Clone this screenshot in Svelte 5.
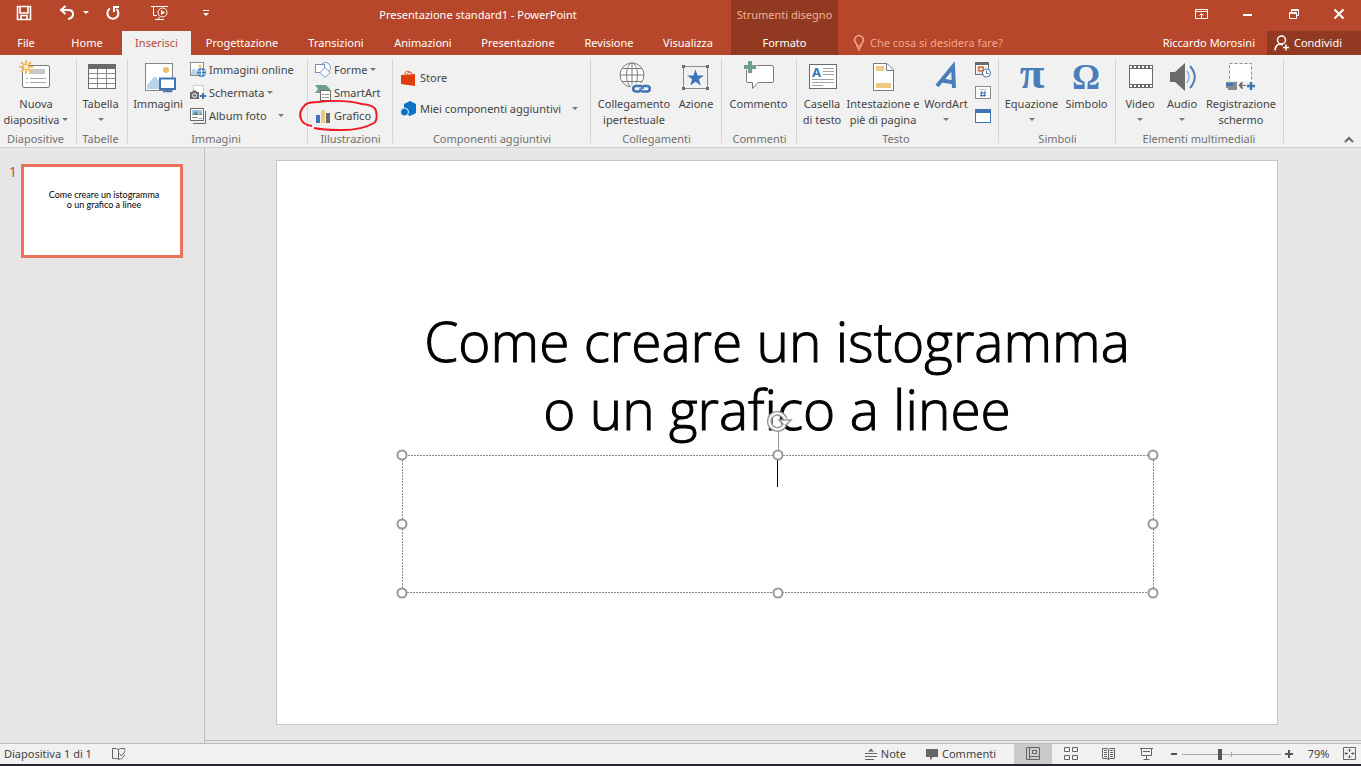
<script>
  const tabs = ['File', 'Home', 'Inserisci', 'Progettazione', 'Transizioni', 'Animazioni', 'Presentazione', 'Revisione', 'Visualizza'];

  const groups = [
    { id: 'slides', label: 'Diapositive', items: [{ icon: 'newslide', lines: ['Nuova', 'diapositiva'], drop: 'inline' }] },
    { id: 'tables', label: 'Tabelle', items: [{ icon: 'table', lines: ['Tabella'], drop: 'below' }] },
    {
      id: 'images', label: 'Immagini',
      items: [{ icon: 'picture', lines: ['Immagini'] }],
      list: [
        { icon: 'online', text: 'Immagini online' },
        { icon: 'screenshot', text: 'Schermata', drop: true },
        { icon: 'album', text: 'Album foto', drop: true, wide: true }
      ]
    },
    {
      id: 'illustrations', label: 'Illustrazioni', items: [],
      list: [
        { icon: 'shapes', text: 'Forme', drop: true },
        { icon: 'smartart', text: 'SmartArt' },
        { icon: 'chart', text: 'Grafico', marked: true }
      ]
    },
    {
      id: 'addins', label: 'Componenti aggiuntivi', items: [],
      list: [
        { icon: 'store', text: 'Store' },
        { icon: 'addin', text: 'Miei componenti aggiuntivi', drop: true, wide: true }
      ]
    },
    { id: 'links', label: 'Collegamenti', items: [{ icon: 'link', lines: ['Collegamento', 'ipertestuale'] }, { icon: 'action', lines: ['Azione'] }] },
    { id: 'comments', label: 'Commenti', items: [{ icon: 'comment', lines: ['Commento'] }] },
    {
      id: 'text', label: 'Testo',
      items: [
        { icon: 'textbox', lines: ['Casella', 'di testo'] },
        { icon: 'header', lines: ['Intestazione e', 'piè di pagina'] },
        { icon: 'wordart', lines: ['WordArt'], drop: 'below' }
      ],
      list: [
        { icon: 'date', name: 'Data e ora' },
        { icon: 'number', name: 'Numero diapositiva' },
        { icon: 'object', name: 'Oggetto' }
      ]
    },
    { id: 'symbols', label: 'Simboli', items: [{ icon: 'pi', lines: ['Equazione'], drop: 'below' }, { icon: 'omega', lines: ['Simbolo'] }] },
    {
      id: 'media', label: 'Elementi multimediali',
      items: [
        { icon: 'video', lines: ['Video'], drop: 'below' },
        { icon: 'audio', lines: ['Audio'], drop: 'below' },
        { icon: 'record', lines: ['Registrazione', 'schermo'] }
      ]
    }
  ];

  const handles = ['nw', 'n', 'ne', 'w', 'e', 'sw', 's', 'se'];
  let zoom = $state(38);
</script>

{#snippet bigIcon(name)}
  <svg class="big" viewBox="0 0 32 32" aria-hidden="true">
    {#if name === 'newslide'}
      <rect x="2.5" y="5.5" width="27" height="22" rx="1.5" fill="#fff" stroke="#7b7b7b" />
      <rect x="9" y="9" width="16" height="5" fill="#c8c8c8" />
      <path d="M6 18.500H8M10 18.500H26M6 22.500H8M10 22.500H26" stroke="#a5a5a5" />
      <path d="M6 0V14M-1 7H13M1 2L11 12M11 2L1 12" stroke="#f0bf62" stroke-width="2" />
      <circle cx="6" cy="7" r="2.500" fill="#fff3d6" stroke="#f0bf62" />
    {:else if name === 'table'}
      <rect x="3.500" y="4.500" width="27" height="24" fill="#fff" stroke="#6b6b6b" />
      <rect x="3" y="4" width="28" height="5" fill="#6b6b6b" />
      <path d="M4 13.500H30M4 18.500H30M4 23.500H30M12.500 9V28M21.500 9V28" stroke="#8b8b8b" />
    {:else if name === 'picture'}
      <rect x="3.500" y="3.500" width="27" height="27" fill="#fff" stroke="#858585" />
      <circle cx="24" cy="10" r="3" fill="#edc063" />
      <path d="M5 29V25L12 17Q13.500 16 15 18L17 21V29Z" fill="#b9d2ea" />
      <rect x="18" y="18.500" width="15" height="10.500" fill="#fff" stroke="#3f74b5" stroke-width="2" />
      <path d="M25.500 29V31M21 31.500H30" stroke="#3f74b5" stroke-width="1.500" />
    {:else if name === 'link'}
      <circle cx="14" cy="15" r="12" fill="#fff" stroke="#7b7b7b" />
      <ellipse cx="14" cy="15" rx="5.500" ry="12" fill="none" stroke="#7b7b7b" />
      <path d="M14 3V27M2 15H26M4 8.500H24M4 21.500H24" fill="none" stroke="#7b7b7b" />
      <g fill="none" stroke="#f1f1f1" stroke-width="6"><rect x="15" y="26" width="9" height="5.500" rx="2.750" /><rect x="22" y="26" width="9" height="5.500" rx="2.750" /></g>
      <path d="M22 31.500H17.500A2.800 2.800 0 0 1 17.500 26H22Q25 26 24.500 29M25 26H29.500A2.800 2.800 0 0 1 29.500 31.500H25Q22 31.500 22.500 28.500" fill="none" stroke="#3f74b5" stroke-width="2.500" />
    {:else if name === 'action'}
      <rect x="3.500" y="6.500" width="24" height="22" fill="none" stroke="#8b8b8b" />
      <path d="M2 5h3v3h-3zM26 5h3v3h-3zM2 27h3v3h-3zM26 27h3v3h-3z" fill="#6b6b6b" />
      <path d="M15.500 9.500L17.600 15.500H24L18.900 19.200L20.800 25.500L15.500 21.700L10.200 25.500L12.100 19.200L7 15.500H13.400Z" fill="#3f74b5" />
    {:else if name === 'comment'}
      <path d="M5 5.500H29Q30.500 5.500 30.500 7V21Q30.500 22.500 29 22.500H15L9.500 28.500V22.500H5Q3.500 22.500 3.500 21V7Q3.500 5.500 5 5.500Z" fill="#fff" stroke="#7b7b7b" />
      <path d="M7 0.500V13.500M0.500 7H13.500" stroke="#f1f1f1" stroke-width="6" />
      <path d="M7 1V13M1 7H13" stroke="#6d9f8c" stroke-width="4" />
    {:else if name === 'textbox'}
      <rect x="3.500" y="4.500" width="27" height="24" fill="#fff" stroke="#6b6b6b" />
      <text x="6" y="17" font-size="13" font-weight="bold" fill="#3f74b5">A</text>
      <path d="M17 8.500H28M17 11.500H28M17 14.500H28M6 19.500H28M6 22.500H28M6 25.500H17" stroke="#a5a5a5" />
    {:else if name === 'header'}
      <path d="M6.500 3.500H20L26.500 10V30.500H6.500Z" fill="#fff" stroke="#7b7b7b" />
      <path d="M19.500 3.500V10.500H26.500" fill="none" stroke="#7b7b7b" />
      <path d="M9 6h8v5h-8zM9 23h15v5h-15z" fill="#edc983" />
    {:else if name === 'wordart'}
      <path d="M7 26L23 6.500L24 28M12 20.500L24 22.500" fill="none" stroke="#4a7ebb" stroke-width="4" />
    {:else if name === 'pi'}
      <text x="16" y="28" text-anchor="middle" font-size="45" font-weight="bold" fill="#4a7ebb" class="serif">π</text>
    {:else if name === 'omega'}
      <text x="15" y="29" text-anchor="middle" font-size="35" font-weight="bold" fill="#4a7ebb" class="serif">Ω</text>
    {:else if name === 'video'}
      <rect x="5" y="5" width="24" height="23" fill="#6b6b6b" />
      <rect x="6" y="9" width="22" height="15" fill="#fff" />
      <path d="M6 7H29M6 26H29" stroke="#fff" stroke-width="2" stroke-dasharray="2 2" />
    {:else if name === 'audio'}
      <path d="M4 12H9L19 3V31L9 22H4Z" fill="#6b6b6b" />
      <path d="M21 11Q25 17 21 23" fill="none" stroke="#8fb0d8" stroke-width="1.500" />
      <path d="M24 6Q33.500 17 24 28" fill="none" stroke="#4a7ebb" stroke-width="2" />
    {:else}
      <rect x="4.500" y="3.500" width="22" height="18" fill="#fff" stroke="#8b8b8b" stroke-dasharray="3 2" />
      <rect x="0" y="21" width="31" height="11" fill="#f1f1f1" />
      <path d="M1 22H12V30H3V28H1Z" fill="#8b8b8b" /><path d="M1 23h7v3h-7z" fill="#3f74b5" />
      <path d="M14 25L17 22V29ZM18 25.500H21" fill="#6b6b6b" stroke="#6b6b6b" />
      <path d="M26 22V30M22 26H30" stroke="#3f74b5" stroke-width="2.500" />
    {/if}
  </svg>
{/snippet}

{#snippet smallIcon(name)}
  <svg class="small" viewBox="0 0 16 16" aria-hidden="true">
    {#if name === 'online'}
      <rect x=".5" y=".5" width="13" height="13" fill="#fff" stroke="#8b8b8b" />
      <circle cx="10" cy="4" r="1.500" fill="#edc063" />
      <path d="M1 13V10L4 6L7 10V13Z" fill="#b9d2ea" />
      <circle cx="11.500" cy="10.500" r="4.500" fill="#3f74b5" />
      <path d="M7.500 9H15.500M7.500 12H15.500M11.500 6.500V14.500" stroke="#e8f0fa" />
    {:else if name === 'screenshot'}
      <rect x="3.500" y=".5" width="10" height="10" fill="#fff" stroke="#a5a5a5" stroke-dasharray="1 1" />
      <path d="M0 7H2L3 5.500H6L7 7H9V14H0Z" fill="#6b6b6b" /><circle cx="4.500" cy="10.500" r="2" fill="#6b6b6b" stroke="#fff" />
      <path d="M13 8V14M10 11H16" stroke="#3f74b5" stroke-width="2" />
    {:else if name === 'album'}
      <path d="M3 15.500H15.500V3" fill="none" stroke="#6b6b6b" /><rect x=".5" y=".5" width="13" height="12" fill="#fff" stroke="#6b6b6b" />
      <path d="M2 2h10v5h-10z" fill="#9cc3e6" /><path d="M2 7L6 3L9 7L12 4V7Z" fill="#5b9279" /><path d="M2 9.500H8M9 10.500H12" stroke="#8b8b8b" />
    {:else if name === 'shapes'}
      <circle cx="10.500" cy="5.500" r="5" fill="#fff" stroke="#6e93c4" />
      <rect x=".5" y="2.500" width="9" height="8" fill="#fff" stroke="#6e93c4" />
      <path d="M10 5.500L15 10.500L10 15.500L5 10.500Z" fill="#fff" stroke="#6e93c4" />
    {:else if name === 'smartart'}
      <path d="M0 0H11L15 4L11 8H0L3 4Z" fill="#6d9f8c" />
      <rect x="5.500" y="5.500" width="10" height="10" fill="#fff" stroke="#6b6b6b" />
      <path d="M7 9.500H9M10 9.500H14M7 12.500H9M10 12.500H14" stroke="#8b8b8b" />
    {:else if name === 'chart'}
      <path d="M1 7h4v8h-4z" fill="#3f74b5" /><path d="M6 2h4v13h-4z" fill="#edc983" /><path d="M11 5h4v10h-4z" fill="#6b6b6b" />
    {:else if name === 'store'}
      <path d="M0 5L14 4V16L0 14Z" fill="#e23c0a" /><path d="M4 6V3Q5 0 8 1.500Q11 2 11 5M6 5Q6 1 10 3" fill="none" stroke="#e8633e" />
    {:else if name === 'addin'}
      <path d="M9 0L15 3V12L9 15L5 13V9L3 7V3Z" fill="#0a72c7" /><circle cx="3.500" cy="11" r="4" fill="#0a72c7" stroke="#f1f1f1" />
    {:else if name === 'date'}
      <rect x=".5" y=".5" width="13" height="12" fill="#fff" stroke="#6b6b6b" /><path d="M0 0h14v3h-14z" fill="#6b6b6b" />
      <path d="M2 5.500H12M2 8.500H12M2 11H8" stroke="#a5a5a5" stroke-dasharray="1 1" /><rect x="4" y="5" width="4" height="4" fill="none" stroke="#d9662b" stroke-width="1.500" />
      <circle cx="11.500" cy="11" r="4" fill="#fff" stroke="#3f74b5" /><path d="M11.500 8.500V11.500H13.500" fill="none" stroke="#6b6b6b" />
    {:else if name === 'number'}
      <rect x=".5" y="1.500" width="15" height="12" fill="#fff" stroke="#8b8b8b" /><path d="M4 4.500H12" stroke="#c0c0c0" />
      <path d="M7 6L6 12M10 6L9 12M5 8H11M5 10.500H11" stroke="#3f74b5" />
    {:else}
      <rect x=".5" y="1.500" width="15" height="13" fill="#fff" stroke="#3f74b5" /><path d="M0 1h16v4h-16z" fill="#3f74b5" />
    {/if}
  </svg>
{/snippet}

{#snippet arrow()}<svg class="arrow" viewBox="0 0 6 4" aria-hidden="true"><path d="M0 0H6L3 3Z" fill="currentColor" /></svg>{/snippet}

<div class="app">
  <header>
    <div class="titlebar">
      <div class="quick">
        <button aria-label="Salva"><svg viewBox="0 0 16 16"><path d="M1.500 1.500H14.500V14.500H1.500ZM4 2V8H12V2M5 14V10.500H11V14" fill="none" stroke="#fff" stroke-width="1.600" /></svg></button>
        <button class="undo" aria-label="Annulla"><svg viewBox="0 0 16 16"><path d="M6.500 1L2 5L6.500 9M2.500 5H9Q14 5 14 9T9 14" fill="none" stroke="#fff" stroke-width="2" /></svg>{@render arrow()}</button>
        <button aria-label="Ripeti"><svg viewBox="0 0 16 16"><path d="M5 3.500A5.500 5.500 0 1 0 11.500 4M9 7V2H14" fill="none" stroke="#fff" stroke-width="2" /></svg></button>
        <button class="show" aria-label="Presentazione"><svg viewBox="0 0 18 16"><path d="M0 1.500H17M2.500 2V10.500H6M4 14.500H7L8.500 12M7 14.500H13" fill="none" stroke="#fff" /><circle cx="11.500" cy="7.500" r="4.500" fill="none" stroke="#fff" /><path d="M10 5V10L14 7.500Z" fill="#fff" /></svg></button>
        <button class="more" aria-label="Personalizza barra"><svg viewBox="0 0 16 16"><path d="M5 5.500H11" stroke="#fff" /><path d="M5 8H11L8 11Z" fill="#fff" /></svg></button>
      </div>
      <span class="title">Presentazione standard1 - PowerPoint</span>
    </div>
    <nav class="tabs" aria-label="Schede">
      {#each tabs as tab}<button class:active={tab === 'Inserisci'}>{tab}</button>{/each}
    </nav>
    <div class="context"><span>Strumenti disegno</span><button>Formato</button></div>
    <div class="controls">
      <button aria-label="Opzioni barra multifunzione"><svg viewBox="0 0 14 14"><path d="M.5 2.500H12.500V11.500H.5ZM.5 4.500H12.500M6.500 11V6.500M4.500 8.500L6.500 6.500L8.500 8.500" fill="none" stroke="#fff" /></svg></button>
      <button aria-label="Riduci a icona"><svg viewBox="0 0 14 14"><path d="M2 8H11" stroke="#fff" stroke-width="2" /></svg></button>
      <button aria-label="Ripristina"><svg viewBox="0 0 14 14"><path d="M2.500 5.500H9.500V11.500H2.500ZM2.500 6.500H9.500M4.500 5V2.500H11.500V8.500H10M4.500 3.500H11.500" fill="none" stroke="#fff" /></svg></button>
      <button aria-label="Chiudi"><svg viewBox="0 0 14 14"><path d="M2.500 2.500L11.500 11.500M11.500 2.500L2.500 11.500" stroke="#fff" stroke-width="2" /></svg></button>
    </div>
    <div class="account">
      <button class="tell"><svg viewBox="0 0 12 16"><path d="M4 11Q4 9 2.500 7.500A4.300 4.300 0 1 1 9.500 7.500Q8 9 8 11ZM4 13H8M5 15H7" fill="none" stroke="#f3a58d" stroke-width="1.500" /></svg>Che cosa si desidera fare?</button>
      <button class="user">Riccardo Morosini</button>
      <button class="share"><svg viewBox="0 0 16 16"><circle cx="7.500" cy="5" r="4" fill="none" stroke="#fff" stroke-width="1.500" /><path d="M1 15.500Q1.500 9.500 6 9L9 10M12 9.500V15.500M9 12.500H15" fill="none" stroke="#fff" stroke-width="1.500" /></svg>Condividi</button>
    </div>
  </header>

  <section class="ribbon" aria-label="Inserisci">
    {#each groups as group}
      <div class="group {group.id}">
        <div class="tools">
          {#each group.items as item}
            <button class="tool">
              {@render bigIcon(item.icon)}
              {#each item.lines as line, i}
                <span>{line}{#if item.drop === 'inline' && i === item.lines.length - 1}{@render arrow()}{/if}</span>
              {/each}
              {#if item.drop === 'below'}<span class="below">{@render arrow()}</span>{/if}
            </button>
          {/each}
          {#if group.list}
            <div class="list">
              {#each group.list as row}
                <button class="row" class:wide={row.wide} aria-label={row.text ?? row.name}>
                  {@render smallIcon(row.icon)}{#if row.text}<span>{row.text}</span>{/if}{#if row.drop}{@render arrow()}{/if}
                  {#if row.marked}
                    <svg class="ring" viewBox="0 0 82 34" aria-hidden="true"><path d="M14 27Q5 26 3 20Q0 13 7 6Q10 3 20 3Q45 0 64 5Q77 6 78 12Q80 21 76 24Q62 32 40 31Q26 31 16 29" /></svg>
                  {/if}
                </button>
              {/each}
            </div>
          {/if}
        </div>
        <div class="caption">{group.label}</div>
      </div>
    {/each}
    <button class="collapse" aria-label="Comprimi barra multifunzione"><svg viewBox="0 0 10 6"><path d="M1 5L5 1L9 5" fill="none" stroke="#666" stroke-width="2" /></svg></button>
  </section>

  <main>
    <aside>
      <span class="index">1</span>
      <button class="thumb"><span>Come creare un istogramma</span><span>o un grafico a linee</span></button>
    </aside>
    <div class="stage">
      <div class="slide">
        <h1>Come creare un istogramma<br />o un grafico a linee</h1>
        <div class="selection">
          <textarea aria-label="Sottotitolo"></textarea>
          <svg class="outline" aria-hidden="true"><rect width="100%" height="100%" /></svg>
          <i class="caret"></i>
          <i class="stem"></i>
          {#each handles as h}<i class="handle {h}"></i>{/each}
          <svg class="rotate" viewBox="0 0 26 22" aria-hidden="true">
            <path d="M17.500 15A8 8 0 1 1 18 9" fill="none" stroke="#999" stroke-width="5" />
            <path d="M12 10H24L18 16Z" fill="#fff" stroke="#999" stroke-width="1.500" />
            <path d="M17.500 15A8 8 0 1 1 18 9" fill="none" stroke="#fff" stroke-width="2" />
          </svg>
        </div>
      </div>
    </div>
  </main>

  <footer>
    <span class="count">Diapositiva 1 di 1</span>
    <button class="spell" aria-label="Controllo ortografia"><svg viewBox="0 0 15 14"><path d="M6.500 12.500V2.500L4.500 1.500H.5V11.500H4.500L6.500 12.500L8.500 11.500M6.500 2.500L8.500 1.500H12.500V3M7.500 6.500L9.500 9L13.500 3.500M9 12.500L13 8" fill="none" stroke="#666" /></svg></button>
    <div class="status">
      <button class="note"><svg viewBox="0 0 12 12"><path d="M0 5.500H12M0 8.500H12M0 11.500H9" stroke="#666" /><path d="M3 3.500L6 .5L9 3.500Z" fill="#666" /></svg>Note</button>
      <button class="comm"><svg viewBox="0 0 12 12"><path d="M0 1H12V9H7L4 12V9H0Z" fill="#666" /></svg>Commenti</button>
      <button class="view on" aria-label="Normale"><svg viewBox="0 0 14 14"><path d="M.5 .5H13.500V12.500H.5ZM3.500 1V12M4 9.500H13M6.500 3.500H10.500V6.500H6.500Z" fill="none" stroke="#666" /></svg></button>
      <button class="view" aria-label="Sequenza diapositive"><svg viewBox="0 0 14 14"><path d="M.5 .5H5.500V4.500H.5ZM8.500 .5H13.500V4.500H8.500ZM.5 8.500H5.500V12.500H.5ZM8.500 8.500H13.500V12.500H8.500Z" fill="none" stroke="#666" /></svg></button>
      <button class="view" aria-label="Lettura"><svg viewBox="0 0 14 14"><path d="M6.500 13V2.500L5 1.500H.5V11.500H5L6.500 12.500L8 11.500H12.500V1.500H8L6.500 2.500M2 3.500H5M2 5.500H5M2 7.500H5M2 9.500H5M8 3.500H11M8 5.500H11M8 7.500H11M8 9.500H11" fill="none" stroke="#666" /></svg></button>
      <button class="view" aria-label="Presentazione"><svg viewBox="0 0 14 14"><path d="M0 1.500H13M1.500 2V8.500H11.500V2M3 4.500H10M6.500 9V12.500M3.500 12.500H9.500" fill="none" stroke="#666" /></svg></button>
      <button class="step" aria-label="Zoom indietro"><svg viewBox="0 0 8 8"><path d="M1 4H7" stroke="#555" stroke-width="2" /></svg></button>
      <input type="range" min="0" max="100" bind:value={zoom} aria-label="Zoom" />
      <button class="step" aria-label="Zoom avanti"><svg viewBox="0 0 8 8"><path d="M0 4H8M4 0V8" stroke="#555" stroke-width="2" /></svg></button>
      <button class="percent">79%</button>
      <button class="fit" aria-label="Adatta alla finestra"><svg viewBox="0 0 14 14"><path d="M.5 .5H12.500V12.500H.5ZM6.500 2V5M5 3.500L6.500 2L8 3.500M6.500 11V8M5 9.500L6.500 11L8 9.500M2 6.500H5M3.500 5L2 6.500L3.500 8M11 6.500H8M9.500 5L11 6.500L9.500 8" fill="none" stroke="#666" /></svg></button>
    </div>
  </footer>
</div>

<style>
  :global(body) { margin: 0; }
  .app { min-height: 100vh; display: flex; flex-direction: column; box-sizing: border-box; border-bottom: 2px solid #24262b; font: 11px/16px 'Noto Sans', sans-serif; color: #444; background: #e6e6e6; }
  button { font: inherit; color: inherit; background: none; border: 0; padding: 0; margin: 0; white-space: nowrap; display: flex; align-items: center; justify-content: center; }
  svg { flex: none; display: block; overflow: visible; }
  .arrow { width: 6px; height: 4px; color: #777; }

  header { display: grid; grid-template-columns: 731px 107px 1fr; grid-template-rows: 31px 24px; background: #b7472a; color: #fff; }
  .titlebar { display: flex; }
  .quick { width: 225px; display: flex; align-items: center; padding: 0 0 5px 16px; box-sizing: border-box; }
  .quick svg:not(.arrow) { width: 16px; height: 16px; }
  .quick .arrow { color: #fff; }
  .undo { gap: 8px; margin: 0 16px 0 27px; }
  .show { margin-left: 30px; }
  .show svg:not(.arrow) { width: 18px; }
  .more { margin-left: 29px; }
  .title { flex: 1; text-align: center; line-height: 30px; }
  .tabs { grid-row: 2; grid-column: 1; display: grid; grid-template-columns: 52px 70px 69px 102px 86px 88px 102px 80px 78px; }
  .tabs .active { background: #f1f1f1; color: #b7472a; }
  .context { grid-row: 1 / 3; grid-column: 2; background: #923921; display: grid; grid-template-rows: 31px 24px; }
  .context span { text-align: center; line-height: 30px; color: #f2b09c; white-space: nowrap; }
  .controls { display: flex; justify-content: flex-end; padding-bottom: 4px; }
  .controls button { width: 46px; }
  .controls svg { width: 14px; height: 14px; }
  .controls button:last-child { width: 44px; }
  .account { display: flex; }
  .tell { margin: 0 auto 0 15px; gap: 5px; color: #f3a58d; }
  .tell svg { width: 12px; height: 16px; }
  .user { margin-right: 12px; }
  .share { width: 94px; gap: 4px; background: #923921; box-sizing: border-box; padding-right: 12px; }
  .share svg { width: 16px; height: 16px; }

  .ribbon { display: flex; height: 92px; background: #f1f1f1; border-bottom: 1px solid #cfcfcf; }
  .group { position: relative; display: flex; flex-direction: column; box-sizing: border-box; flex: none; }
  .group::after { content: ''; position: absolute; right: 0; top: 4px; bottom: 4px; width: 1px; background: #d5d5d5; }
  .tools { height: 76px; flex: none; display: grid; }
  .caption { height: 16px; text-align: center; color: #707070; white-space: nowrap; }
  .tool { flex-direction: column; justify-content: flex-start; padding-top: 5px; min-width: 0; }
  .tool > span { display: flex; align-items: center; gap: 3px; }
  .big { width: 32px; height: 32px; margin-bottom: 4px; }
  .below { height: 16px; }
  .list { display: flex; flex-direction: column; padding-top: 3px; }
  .row { position: relative; height: 23px; justify-content: flex-start; gap: 3px; align-self: flex-start; }
  .row.wide .arrow { margin-left: 8px; }
  .small { width: 16px; height: 16px; }
  .ring { position: absolute; left: -17px; top: -5px; width: 82px; height: 34px; fill: none; stroke: #ed1c24; stroke-width: 2; pointer-events: none; }
  .serif { font-family: 'Liberation Serif', serif; }
  .slides { width: 77px; } .slides .tools { grid-template-columns: 72px; } .slides .caption { padding-right: 6px; }
  .tables { width: 51px; } .tables .tools { grid-template-columns: 47px; } .tables .caption { padding-right: 4px; }
  .images { width: 180px; } .images .tools { grid-template-columns: 60px 1fr; } .images .list { padding-left: 2px; } .images .caption { padding-right: 4px; }
  .illustrations { width: 85px; } .illustrations .list { padding-left: 7px; }
  .addins { width: 198px; } .addins .list { padding: 7px 0 0 8px; } .addins .row { height: 31px; }
  .links { width: 131px; } .links .tools { grid-template-columns: 86px 38px; }
  .comments { width: 75px; } .comments .tools { grid-template-columns: 73px; }
  .text { width: 202px; } .text .tools { grid-template-columns: 50px 72px 54px 1fr; } .text .list { padding-left: 2px; } .text .caption { padding-right: 4px; }
  .symbols { width: 117px; } .symbols .tools { grid-template-columns: 65px 45px; }
  .media { width: 168px; } .media .tools { grid-template-columns: 48px 36px 82px; } .media .caption { padding-right: 2px; }
  .collapse { margin: auto 7px 4px auto; }
  .collapse svg { width: 10px; height: 6px; }

  main { flex: 1; display: flex; }
  aside { width: 205px; border-right: 1px solid #bdbdbd; display: flex; align-items: flex-start; padding: 16px 21px 0 9px; box-sizing: border-box; flex: none; }
  .index { width: 12px; flex: none; font-size: 14px; color: #c8502f; }
  .thumb { flex: none; width: 162px; height: 94px; box-sizing: border-box; border: 3px solid #e8735a; background: #fff; flex-direction: column; justify-content: flex-start; padding: 23px 4px 0 8px; color: #000; font: 9px/10px Lato, sans-serif; }
  .stage { flex: 1; border-bottom: 1px solid #bdbdbd; margin-bottom: 2px; padding: 12px 83px 15px 71px; box-sizing: border-box; }
  .slide { position: relative; aspect-ratio: 1002 / 565; border: 1px solid #c6c6c6; background: #fff; box-sizing: border-box; }
  h1 { position: absolute; inset: 26% 0 auto; margin: 0; text-align: center; color: #000; font: 300 55px/68px 'Open Sans', sans-serif; -webkit-text-stroke: 1px #000; }
  .selection { position: absolute; left: 12.5%; top: 52.3%; width: 75.1%; height: 24.4%; }
  textarea { display: block; width: 100%; height: 100%; box-sizing: border-box; border: 0; background: none; resize: none; padding: 0; outline: 0; }
  .outline { position: absolute; inset: 0; width: 100%; height: 100%; fill: none; stroke: #8a8a8a; stroke-dasharray: 2 1; shape-rendering: crispEdges; pointer-events: none; }
  .selection i { position: absolute; }
  .caret { left: calc(50% - 1px); top: 2px; width: 1px; height: 30px; background: #000; }
  .stem { left: 50%; top: -24px; width: 1px; height: 20px; background: #999; }
  .handle { width: 11px; height: 11px; box-sizing: border-box; border: 2px solid #999; border-radius: 50%; background: #fff; transform: translate(-50%, -50%); }
  .nw, .w, .sw { left: 0; } .n, .s { left: 50%; } .ne, .e, .se { left: 100%; }
  .nw, .n, .ne { top: 0; } .w, .e { top: 50%; } .sw, .s, .se { top: 100%; }
  .rotate { position: absolute; left: calc(50% - 11px); top: -45px; width: 26px; height: 22px; }

  footer { display: flex; height: 20px; border-top: 1px solid #bdbdbd; background: #f1f1f1; align-items: stretch; }
  .count { padding-left: 4px; line-height: 20px; }
  .spell { margin-left: 20px; }
  .spell svg { width: 15px; height: 14px; }
  .status { margin-left: auto; display: flex; }
  .note, .comm { gap: 4px; }
  .note { margin-right: 20px; } .comm { margin-right: 18px; }
  .note svg, .comm svg { width: 12px; height: 12px; }
  .view { width: 38px; }
  .view.on { background: #cacaca; }
  .view svg, .fit svg { width: 14px; height: 14px; }
  .step { width: 16px; }
  .step svg { width: 8px; height: 8px; }
  input { appearance: none; width: 99px; margin: 0; height: 20px; background: linear-gradient(#aaa, #aaa) center / 100% 1px no-repeat, linear-gradient(#aaa, #aaa) center / 1px 5px no-repeat; }
  input::-webkit-slider-thumb { appearance: none; width: 4px; height: 11px; background: #555; }
  .percent { width: 43px; }
  .fit { width: 21px; padding-right: 2px; box-sizing: border-box; }
</style>
